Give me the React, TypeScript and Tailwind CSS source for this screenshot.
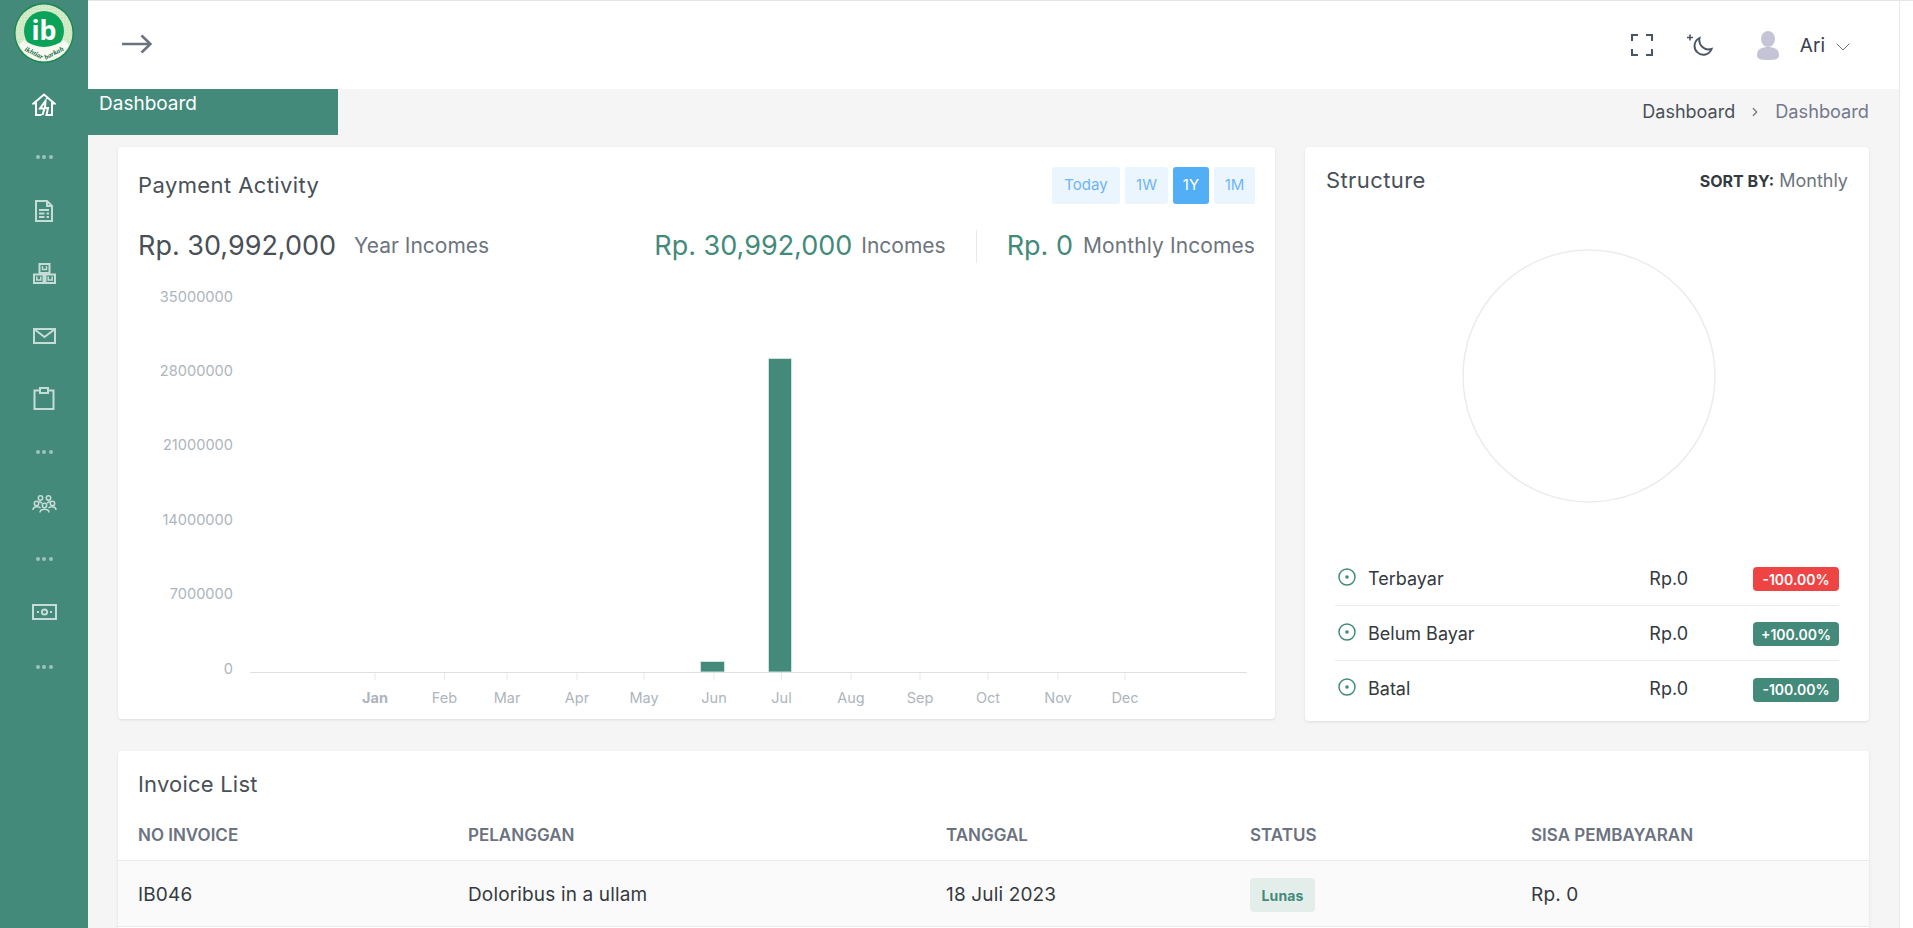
import React from "react";
import { ChevronDown, ChevronRight } from "lucide-react";

const G = "#438a7a";

function Dots() {
  return (
    <div className="flex items-center justify-center gap-[2.5px]">
      <span className="h-1 w-1 rounded-full bg-[#9cc4ba]" />
      <span className="h-1 w-1 rounded-full bg-[#9cc4ba]" />
      <span className="h-1 w-1 rounded-full bg-[#9cc4ba]" />
    </div>
  );
}

function Logo() {
  return (
    <svg width="60" height="60" viewBox="0 0 60 60">
      <defs>
        <pattern id="speck" width="3" height="3" patternUnits="userSpaceOnUse">
          <rect width="3" height="3" fill="#cfe8c4" />
          <circle cx="1.5" cy="1.5" r="0.5" fill="#eef7e8" />
        </pattern>
      </defs>
      <circle cx="30" cy="30" r="30" fill="#1a8a50" />
      <circle cx="30" cy="30" r="28.5" fill="url(#speck)" />
      <circle cx="30" cy="28" r="20" fill="#0ba35a" />
      <path d="M4.7 42 A28 28 0 0 0 55.3 42 L50 37 Q30 51 10 37 Z" fill="#f6faf1" />
      <text x="30" y="37" textAnchor="middle" fontFamily="'Noto Sans', sans-serif" fontWeight="700" fontSize="27" fill="#fff">ib</text>
      <text transform="translate(19 52) rotate(27)" textAnchor="middle" fontFamily="'Liberation Serif', serif" fontStyle="italic" fontWeight="700" fontSize="7" fill="#166b42">ikhtiar</text>
      <text transform="translate(41 52) rotate(-27)" textAnchor="middle" fontFamily="'Liberation Serif', serif" fontStyle="italic" fontWeight="700" fontSize="7" fill="#166b42">barkah</text>
    </svg>
  );
}

const s = { fill: "none", stroke: "currentColor", strokeWidth: 2 };

const IconHome = () => (
  <svg width="24" height="23" viewBox="0 0 24 23" {...s} className="text-white">
    <path d="M9.5 22 H4 V10.5 H1.5 L12 1.5 L22.5 10.5 H20 V22 H14.5 L16 15 H13 L13.5 8 L8 15.5 H12.5 L10.5 22" />
  </svg>
);
const IconDoc = () => (
  <svg width="18" height="22" viewBox="0 0 18 22" {...s}>
    <path d="M1 1 H12 L17 6 V21 H1 Z M12 1 V6 H17" />
    <path d="M4 10 H14 M4 13.5 H9.5 M11.5 13.5 H14 M4 17 H9.5 M11.5 17 H14" />
  </svg>
);
const IconBoxes = () => (
  <svg width="23" height="21" viewBox="0 0 23 21" {...s}>
    <path d="M6.5 1 H16.5 V10 H6.5 Z M1 11.5 H10.5 V20 H1 Z M12.5 11.5 H22 V20 H12.5 Z" />
    <path d="M9.5 3 V6.5 H13.5 V3 M3.8 13.5 V17 H7.8 V13.5 M15.2 13.5 V17 H19.2 V13.5" strokeWidth="1.5" />
  </svg>
);
const IconMail = () => (
  <svg width="23" height="16" viewBox="0 0 23 16" {...s}>
    <path d="M1 1 H22 V15 H1 Z M1 1 L11.5 9 L22 1" />
  </svg>
);
const IconClip = () => (
  <svg width="22" height="23" viewBox="0 0 22 23" {...s}>
    <path d="M7 3.5 H1.5 V22 H20.5 V3.5 H15" />
    <path d="M7 6 V1 H15 V6 Z" />
  </svg>
);
const IconUsers = () => (
  <svg width="25" height="18" viewBox="0 0 25 18" {...s} strokeWidth={1.5}>
    <circle cx="8.5" cy="3" r="2.2" />
    <circle cx="16.5" cy="3" r="2.2" />
    <circle cx="4.5" cy="8.5" r="2.2" />
    <circle cx="20.5" cy="8.5" r="2.2" />
    <circle cx="12.5" cy="10.5" r="2.2" />
    <path d="M1 15 C1 11 7 11 8.5 13 M24 15 C24 11 18 11 16.5 13 M8 17.5 C8 13 17 13 17 17.5 M7 6.5 L10 8 M18 6.5 L15 8" />
  </svg>
);
const IconCash = () => (
  <svg width="25" height="16" viewBox="0 0 25 16" {...s}>
    <rect x="1" y="1" width="23" height="14" />
    <circle cx="12.5" cy="8" r="2.6" />
    <path d="M5 8 H7 M18 8 H20" />
  </svg>
);

function Side({ children, h }: { children: React.ReactNode; h: string }) {
  return <div className={`flex items-center justify-center text-[#c6dcd6] ${h}`}>{children}</div>;
}

function Sidebar() {
  return (
    <aside className="flex h-full w-[88px] shrink-0 flex-col bg-[#438a7a]">
      <div className="flex h-[72px] justify-center pt-[3px]"><Logo /></div>
      <Side h="h-[64px]"><IconHome /></Side>
      <Side h="h-[42px]"><Dots /></Side>
      <Side h="h-[66px]"><IconDoc /></Side>
      <Side h="h-[58px]"><IconBoxes /></Side>
      <Side h="h-[68px]"><IconMail /></Side>
      <Side h="h-[56px]"><IconClip /></Side>
      <Side h="h-[52px]"><Dots /></Side>
      <Side h="h-[52px]"><IconUsers /></Side>
      <Side h="h-[58px]"><Dots /></Side>
      <Side h="h-[48px]"><IconCash /></Side>
      <Side h="h-[62px]"><Dots /></Side>
    </aside>
  );
}

function Header() {
  return (
    <header className="flex h-[89px] shrink-0 items-center border-t border-t-[#e5e5e5] bg-white pl-[34px] pr-[44px]">
      <svg className="mb-[2px]" width="30" height="20" viewBox="0 0 30 20" fill="none" stroke="#6b7280" strokeWidth="2.6">
        <path d="M0 10 H28 M19.5 1.5 L28.5 10 L19.5 18.5" />
      </svg>
      <div className="ml-auto flex items-center">
        <svg width="22" height="22" viewBox="0 0 22 22" fill="none" stroke="#4b5563" strokeWidth="2">
          <path d="M1 7 V1 H7 M15 1 H21 V7 M1 15 V21 H7 M15 21 H21 V15" />
        </svg>
        <svg className="ml-[34px]" width="26" height="22" viewBox="0 0 26 22" fill="none" stroke="#4b5563" strokeWidth="1.9">
          <path d="M12.5 4 A8.8 8.8 0 1 0 24.6 15 A9.5 9.5 0 0 1 12.5 4 Z" />
          <path d="M3 0.5 V6.5 M0 3.5 H6" strokeWidth="1.6" />
        </svg>
        <svg className="ml-[44px]" width="22" height="29" viewBox="0 0 22 29" fill="#c5c3d6">
          <ellipse cx="11" cy="8" rx="7" ry="8" />
          <path d="M0 24 C0 18 5 16 11 16 C17 16 22 18 22 24 C22 28 19 29 11 29 C3 29 0 28 0 24 Z" />
        </svg>
        <span className="ml-[21px] mt-[2px] text-[19px] text-[#374151]">Ari</span>
        <ChevronDown size={24} strokeWidth={1} className="ml-[6px] mt-[3px] text-[#6b7280]" />
      </div>
    </header>
  );
}

const months: [string, number][] = [
  ["Jan", 375], ["Feb", 444.5], ["Mar", 507], ["Apr", 577], ["May", 644], ["Jun", 714],
  ["Jul", 781.5], ["Aug", 851], ["Sep", 920], ["Oct", 988], ["Nov", 1058], ["Dec", 1125],
];
const yl: [string, number][] = [["35000000", 296.5], ["28000000", 371], ["21000000", 445], ["14000000", 520], ["7000000", 594], ["0", 668.5]];

function Chart() {
  return (
    <svg width="1157" height="453" viewBox="118 266 1157 453" className="block" fontFamily="Inter, sans-serif">
      {yl.map(([t, y]) => (
        <text key={t} x="233" y={y + 5} textAnchor="end" fontSize="14.6" fill="#adb5bd">{t}</text>
      ))}
      <line x1="250" x2="1247" y1="672.5" y2="672.5" stroke="#e0e0e0" />
      {months.map(([m, x]) => (
        <g key={m}>
          <line x1={x} x2={x} y1="673" y2="680" stroke="#e8e8e8" />
          <text x={x} y="703" textAnchor="middle" fontSize="14.5" fontWeight={m === "Jan" ? 700 : 400} fill="#adb5bd">{m}</text>
        </g>
      ))}
      <rect x="700.5" y="661.5" width="24" height="10.5" fill={G} stroke="#cfe3dd" />
      <rect x="768.5" y="358.5" width="23" height="313.5" fill={G} stroke="#cfe3dd" />
    </svg>
  );
}

function Tab({ t, on, w }: { t: string; on?: boolean; w: string }) {
  return (
    <span className={`flex h-[37px] items-center justify-center rounded-[3px] text-[15px] ${w} ${on ? "bg-[#53aff5] text-white" : "bg-[#eaf5fe] text-[#70b4f5]"}`}>{t}</span>
  );
}

function PaymentCard() {
  return (
    <section className="h-[572px] w-[1157px] shrink-0 rounded-[4px] bg-white shadow-[0_1px_3px_rgba(0,0,0,0.1)]">
      <div className="flex h-[57px] items-start justify-between px-5 pt-5">
        <h2 className="flex h-[37px] items-center text-[22px] tracking-[0.4px] text-[#495057]">Payment Activity</h2>
        <div className="flex gap-[5px]">
          <Tab t="Today" w="w-[68px]" />
          <Tab t="1W" w="w-[43px]" />
          <Tab t="1Y" on w="w-[36px]" />
          <Tab t="1M" w="w-[41px]" />
        </div>
      </div>
      <div className="mt-[22px] flex h-[40px] items-center px-5">
        <span className="text-[27px] text-[#495057]">Rp. 30,992,000</span>
        <span className="ml-[18px] text-[21px] text-[#6c757d]">Year Incomes</span>
        <span className="ml-auto text-[27px] text-[#438a7a]">Rp. 30,992,000</span>
        <span className="ml-[9px] text-[21px] text-[#6c757d]">Incomes</span>
        <span className="mx-[30px] h-[33px] w-px bg-[#e9e9ef]" />
        <span className="text-[27px] text-[#438a7a]">Rp. 0</span>
        <span className="ml-[10px] text-[21px] tracking-[0.1px] text-[#6c757d]">Monthly Incomes</span>
      </div>
      <Chart />
    </section>
  );
}

function LegendRow({ label, badge, red, last }: { label: string; badge: string; red?: boolean; last?: boolean }) {
  return (
    <div className={`flex h-[55px] items-center ${last ? "" : "border-b border-b-[#ececec]"}`}>
      <svg className="mb-[3px] ml-[3px]" width="18" height="18" viewBox="0 0 18 18" fill="none">
        <circle cx="9" cy="9" r="8" stroke="#438a7a" strokeWidth="1.5" />
        <circle cx="9" cy="9" r="1.8" fill="#438a7a" />
      </svg>
      <span className="ml-[12px] text-[18px] text-[#343a40]">{label}</span>
      <span className="ml-auto mr-[65px] text-[18px] text-[#343a40]">Rp.0</span>
      <span className={`mt-[2px] flex h-6 w-[86px] items-center justify-center rounded-[4px] text-[14px] font-semibold text-white ${red ? "bg-[#ef4444]" : "bg-[#438a7a]"}`}>{badge}</span>
    </div>
  );
}

function StructureCard() {
  return (
    <section className="h-[574px] flex-1 rounded-[4px] bg-white px-[21px] shadow-[0_1px_3px_rgba(0,0,0,0.1)]">
      <div className="flex h-[67px] items-center justify-between">
        <h2 className="text-[22px] tracking-[0.4px] text-[#495057]">Structure</h2>
        <span className="text-[18px] text-[#6c757d]"><b className="text-[16px] font-bold text-[#343a40]">SORT BY:</b> Monthly</span>
      </div>
      <div className="mt-[35px] flex justify-center pl-[3px]">
        <svg width="254" height="254" viewBox="0 0 254 254"><circle cx="127" cy="127" r="126" fill="none" stroke="#ececec" strokeWidth="1.5" /></svg>
      </div>
      <div className="mx-[9px] mt-[48px]">
        <LegendRow label="Terbayar" badge="-100.00%" red />
        <LegendRow label="Belum Bayar" badge="+100.00%" />
        <LegendRow label="Batal" badge="-100.00%" last />
      </div>
    </section>
  );
}

function InvoiceCard() {
  return (
    <section className="mt-[30px] shrink-0 rounded-[4px] bg-white shadow-[0_1px_3px_rgba(0,0,0,0.1)]">
      <h2 className="px-5 pt-[17px] text-[22px] leading-[32px] tracking-[0.2px] text-[#495057]">Invoice List</h2>
      <div className="grid h-[61px] grid-cols-[330px_478px_304px_281px_1fr] border-b border-b-[#e9e9ef] px-5 pt-[23px] text-[17px] font-semibold leading-6 text-[#6b7280]">
        <span>NO INVOICE</span><span>PELANGGAN</span><span>TANGGAL</span><span>STATUS</span><span>SISA PEMBAYARAN</span>
      </div>
      <div className="grid h-[66px] grid-cols-[330px_478px_304px_281px_1fr] items-center border-b border-b-[#e9e9ef] bg-[#fafafa] px-5 pt-[3px] text-[19px] tracking-[0.15px] text-[#343a40]">
        <span>IB046</span><span>Doloribus in a ullam</span><span>18 Juli 2023</span>
        <span><span className="inline-flex h-[34px] w-[65px] items-center justify-center rounded-[4px] bg-[#e3eeeb] text-[14px] font-bold text-[#438a7a]">Lunas</span></span>
        <span>Rp. 0</span>
      </div>
      <div className="h-[100px]" />
    </section>
  );
}

export default function App() {
  return (
    <div className="flex h-[928px] w-[1913px] overflow-hidden bg-white font-['Inter',sans-serif]">
      <Sidebar />
      <div className="flex w-[1811px] flex-col bg-[#f5f5f5]">
        <Header />
        <div className="flex-1 overflow-hidden">
          <div className="flex h-[46px] items-start justify-between">
            <div className="h-[46px] w-[250px] bg-[#438a7a] pl-[11px] pt-[1px] text-[19px] text-white">Dashboard</div>
            <div className="mr-[30px] mt-[9px] flex items-center text-[18px]">
              <span className="text-[#495057]">Dashboard</span>
              <ChevronRight size={14} className="mx-[13px] text-[#6c757d]" />
              <span className="text-[18.2px] text-[#74788d]">Dashboard</span>
            </div>
          </div>
          <div className="mx-[30px] mt-[12px] flex flex-col">
            <div className="flex items-start gap-[30px]">
              <PaymentCard />
              <StructureCard />
            </div>
            <InvoiceCard />
          </div>
        </div>
      </div>
      <div className="w-[14px] shrink-0 border-l border-t border-[#e8e8e8] bg-white" />
    </div>
  );
}
